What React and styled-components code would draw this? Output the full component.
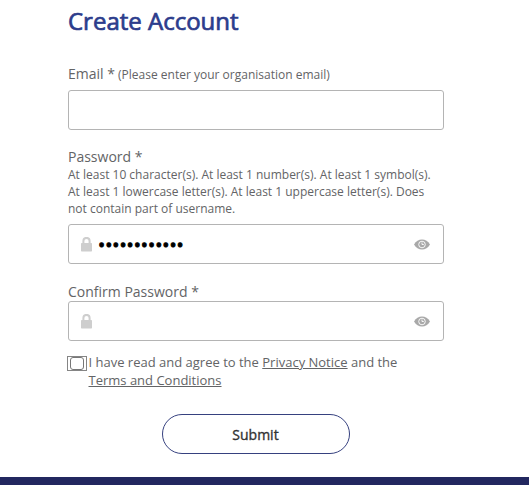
import React, { useState } from 'react';
import styled, { createGlobalStyle } from 'styled-components';

const GlobalStyle = createGlobalStyle`
  * {
    box-sizing: border-box;
  }
  body {
    margin: 0;
    background: white;
    font-family: "Open Sans", "Noto Sans", sans-serif;
    color: #636466;
  }
`;

const Page = styled.div`
  height: 485px;
  display: flex;
  flex-direction: column;
  overflow: hidden;
`;

const Formulario = styled.form`
  width: 376px;
  margin-left: 68px;
  flex: 1;
  display: flex;
  flex-direction: column;
`;

const Title = styled.h1`
  margin: 4px 0 0;
  font-size: 24px;
  line-height: 34px;
  font-weight: 500;
  -webkit-text-stroke: 0.7px #2c3c8c;
  color: #2c3c8c;
  white-space: nowrap;
`;

const Label = styled.label`
  margin-top: ${(props) => props.$top}px;
  font-size: 14px;
  line-height: 18px;
  white-space: nowrap;
`;

const Hint = styled.span`
  margin-left: -0.5px;
  font-size: 12px;
`;

const Rules = styled.p`
  margin: 0;
  font-size: 12px;
  line-height: 17px;
  white-space: nowrap;
`;

const Field = styled.div`
  margin-top: ${(props) => props.$top}px;
  height: 40px;
  display: flex;
  align-items: center;
  padding: 0 13px 0 12px;
  border: 1px solid #b4b4b4;
  border-radius: 3px;
`;

const Input = styled.input`
  flex: 1;
  min-width: 0;
  height: 36px;
  margin: 0 6px;
  padding: ${(props) => (props.type === 'password' ? '2px 0 0' : '0')};
  border: none;
  outline: none;
  background: transparent;
  font-family: "Open Sans", sans-serif;
  font-size: ${(props) => (props.type === 'password' ? 19 : 14)}px;
  -webkit-text-stroke: ${(props) => (props.type === 'password' ? '0.9px black' : '0')};
  color: black;
`;

const EyeButton = styled.button`
  display: flex;
  padding: 0;
  border: none;
  background: transparent;
`;

const Agreement = styled.label`
  margin-top: 12px;
  display: flex;
  align-items: flex-start;
  font-size: 13px;
  line-height: 18px;
  white-space: nowrap;
`;

const CheckFrame = styled.span`
  width: 20px;
  height: 15px;
  margin: 3px 1.5px 0 -1px;
  display: flex;
  flex: none;
  align-items: center;
  justify-content: center;
  border: 1px solid #858585;
`;

const Checkbox = styled.input`
  appearance: none;
  width: 14px;
  height: 13px;
  margin: 0;
  border: 1px solid #777;
  border-radius: 3px;
  background: white;
`;

const Link = styled.a`
  color: inherit;
  text-decoration: underline;
`;

const SubmitButton = styled.button`
  align-self: center;
  width: 188px;
  height: 40px;
  margin: 25px 0 0;
  padding: 1px 1px 0 0;
  border: 1px solid #36417f;
  border-radius: 20px;
  background: white;
  font-family: "Open Sans", sans-serif;
  font-size: 14px;
  font-weight: 500;
  -webkit-text-stroke: 0.35px #333;
  color: #333;
`;

const Footer = styled.div`
  height: 8px;
  flex: none;
  background: #22275f;
`;

const LockIcon = () => (
  <svg width="11" height="15" viewBox="0 0 11 15">
    <path d="M2.4 7V4a3.1 3.1 0 0 1 6.2 0v3" fill="none" stroke="#cecece" strokeWidth="2" />
    <rect x="0" y="6" width="11" height="8.5" rx="0.7" fill="#cecece" />
  </svg>
);

const EyeIcon = () => (
  <svg width="16" height="11" viewBox="0 0 16 11">
    <path d="M0 5.5C2 2.1 4.7.5 8 .5s6 1.6 8 5c-2 3.4-4.7 5-8 5s-6-1.6-8-5z" fill="#a9a9a9" />
    <circle cx="8" cy="5.5" r="3.3" fill="none" stroke="white" strokeWidth="0.9" />
    <path d="M8 3.5v2h1.8" fill="none" stroke="white" strokeWidth="0.9" />
  </svg>
);

const PasswordField = ({ id, top, value, onChange }) => {
  const [visible, setVisible] = useState(false);

  return (
    <Field $top={top}>
      <LockIcon />
      <Input id={id} type={visible ? 'text' : 'password'} name={id} value={value} onChange={onChange} />
      <EyeButton type="button" aria-label="Show password" onClick={() => setVisible(!visible)}>
        <EyeIcon />
      </EyeButton>
    </Field>
  );
};

const App = () => {
  const [formState, setFormState] = useState({
    email: '',
    password: 'abcdefgh123!',
    confirm: '',
  });

  const handleChange = (e) => {
    const { name, value } = e.target;
    setFormState({ ...formState, [name]: value });
  };

  return (
    <Page>
      <GlobalStyle />
      <Formulario onSubmit={(e) => e.preventDefault()}>
        <Title>Create Account</Title>

        <Label $top={27} htmlFor="email">
          Email * <Hint>(Please enter your organisation email)</Hint>
        </Label>
        <Field $top={6}>
          <Input id="email" type="text" name="email" value={formState.email} onChange={handleChange} />
        </Field>

        <Label $top={18} htmlFor="password">Password *</Label>
        <Rules>
          At least 10 character(s). At least 1 number(s). At least 1 symbol(s).<br />
          At least 1 lowercase letter(s). At least 1 uppercase letter(s). Does<br />
          not contain part of username.
        </Rules>
        <PasswordField id="password" top={7} value={formState.password} onChange={handleChange} />

        <Label $top={19} htmlFor="confirm">Confirm Password *</Label>
        <PasswordField id="confirm" top={0} value={formState.confirm} onChange={handleChange} />

        <Agreement>
          <CheckFrame>
            <Checkbox type="checkbox" />
          </CheckFrame>
          <span>
            I have read and agree to the <Link>Privacy Notice</Link> and the<br />
            <Link>Terms and Conditions</Link>
          </span>
        </Agreement>

        <SubmitButton type="submit">Submit</SubmitButton>
      </Formulario>
      <Footer />
    </Page>
  );
};

export default App;
